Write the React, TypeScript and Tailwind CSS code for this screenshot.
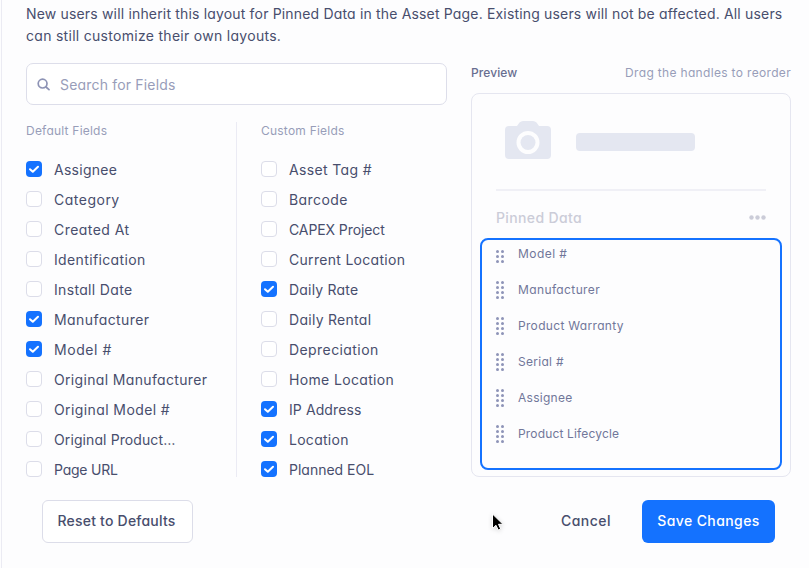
type Field = { name: string; tracking: string; checked?: boolean };

const defaultFields: Field[] = [
  { name: "Assignee", tracking: "tracking-[0.28px]", checked: true },
  { name: "Category", tracking: "tracking-[0.5px]" },
  { name: "Created At", tracking: "tracking-[0.45px]" },
  { name: "Identification", tracking: "tracking-[0.36px]" },
  { name: "Install Date", tracking: "tracking-[0.33px]" },
  { name: "Manufacturer", tracking: "tracking-[0.42px]", checked: true },
  { name: "Model #", tracking: "tracking-[0.55px]", checked: true },
  { name: "Original Manufacturer", tracking: "tracking-[0.34px]" },
  { name: "Original Model #", tracking: "tracking-[0.4px]" },
  { name: "Original Product…", tracking: "tracking-[0.1px]" },
  { name: "Page URL", tracking: "tracking-[-0.22px]" },
];

const customFields: Field[] = [
  { name: "Asset Tag #", tracking: "tracking-[0.36px]" },
  { name: "Barcode", tracking: "tracking-[0.42px]" },
  { name: "CAPEX Project", tracking: "tracking-[-0.1px]" },
  { name: "Current Location", tracking: "tracking-[0.3px]" },
  { name: "Daily Rate", tracking: "tracking-[0.2px]", checked: true },
  { name: "Daily Rental", tracking: "tracking-[0.28px]" },
  { name: "Depreciation", tracking: "tracking-[0.42px]" },
  { name: "Home Location", tracking: "tracking-[0.35px]" },
  { name: "IP Address", tracking: "tracking-[0.1px]", checked: true },
  { name: "Location", tracking: "tracking-[0.28px]", checked: true },
  { name: "Planned EOL", tracking: "tracking-[0px]", checked: true },
];

const pinned = [
  { name: "Model #", tracking: "tracking-[0.45px]" },
  { name: "Manufacturer", tracking: "tracking-[0.38px]" },
  { name: "Product Warranty", tracking: "tracking-[0.32px]" },
  { name: "Serial #", tracking: "tracking-[0.28px]" },
  { name: "Assignee", tracking: "tracking-[0.28px]" },
  { name: "Product Lifecycle", tracking: "tracking-[0.16px]" },
];

function Checkbox({ checked }: { checked?: boolean }) {
  if (!checked) return <span className="size-4 shrink-0 rounded-[4px] border border-[#dcdde9] bg-white" />;
  return (
    <span className="flex size-4 shrink-0 items-center justify-center rounded-[4px] bg-[#1472ff]">
      <svg width="16" height="16" viewBox="0 0 16 16" fill="none" stroke="#fff" strokeWidth="2" strokeLinecap="round" strokeLinejoin="round">
        <path d="M4 8.2 6.8 10.8 12 5.8" />
      </svg>
    </span>
  );
}

function FieldList({ title, fields }: { title: string; fields: Field[] }) {
  return (
    <div className="flex flex-col">
      <h3 className="h-[32px] text-[12px] leading-[18px] tracking-[0.22px] text-[#989db9]">{title}</h3>
      {fields.map((f) => (
        <label key={f.name} className="flex h-[30px] items-center gap-3 whitespace-nowrap">
          <Checkbox checked={f.checked} />
          <span className={`text-[14px] ${f.tracking}`}>{f.name}</span>
        </label>
      ))}
    </div>
  );
}

function Handle({ clipped }: { clipped: boolean }) {
  const rows = clipped ? [7.5, 12.5, 17.5] : [2.5, 7.5, 12.5, 17.5];
  return (
    <svg width="10" height="20" viewBox="0 0 10 20" fill="#8e94b8" className="shrink-0">
      {rows.map((y) => (
        <g key={y}>
          <circle cx="2.5" cy={y} r="1.5" />
          <circle cx="7.5" cy={y} r="1.5" />
        </g>
      ))}
    </svg>
  );
}

export default function App() {
  return (
    <div className="relative flex h-[568px] w-[809px] overflow-hidden bg-[#fdfdfe] font-['Inter','Open_Sans',sans-serif] text-[#484e6d] [font-feature-settings:'cv11']">
      <div className="ml-px w-px shrink-0 bg-[#ebebf3]" />
      <div className="flex flex-1 flex-col pl-6 pt-[3px]">
        <p className="whitespace-nowrap text-[14px] leading-[22px]">
          <span className="block tracking-[0.17px]">New users will inherit this layout for Pinned Data in the Asset Page. Existing users will not be affected. All users</span>
          <span className="block tracking-[0.29px]">can still customize their own layouts.</span>
        </p>

        <div className="mt-[16px] flex h-[414px] shrink-0 gap-6">
          <div className="flex w-[421px] flex-col">
            <div className="flex h-[42px] shrink-0 items-center rounded-[7px] border border-[#dddeea] bg-white pl-[10px]">
              <svg width="13" height="13" viewBox="0 0 13 13" fill="none" stroke="#8d93b5" strokeWidth="1.7" strokeLinecap="round">
                <circle cx="5.6" cy="5.6" r="4.4" />
                <path d="m9 9 3 2.7" />
              </svg>
              <span className="ml-[10px] text-[14px] tracking-[0.18px] text-[#989db9]">Search for Fields</span>
            </div>
            <div className="mt-[17px] flex">
              <div className="w-[210px]">
                <FieldList title="Default Fields" fields={defaultFields} />
              </div>
              <div className="mr-6 h-[355px] w-px bg-[#ebebf4]" />
              <FieldList title="Custom Fields" fields={customFields} />
            </div>
          </div>

          <div className="flex w-[320px] flex-col">
            <div className="flex h-[30px] items-start justify-between text-[12px] leading-[20px]">
              <span className="font-medium tracking-[0.1px] text-[#686e90]">Preview</span>
              <span className="tracking-[0.33px] text-[#989db9]">Drag the handles to reorder</span>
            </div>
            <div className="flex h-[384px] flex-col rounded-[8px] border border-[#e5e6f0] px-2">
              <div className="mx-4 flex h-[97px] items-center border-b-2 border-[#f0f0f6] pl-[9px]">
                <svg width="46" height="39" viewBox="0 0 46 39" className="mt-[-2px]">
                  <path fill="#e4e7f1" fillRule="evenodd" d="M4 5h8l2.500-3.500Q16 0 18 0h10q2 0 3.500 1.500L34 5h8q4 0 4 4v25q0 4-4 4H4q-4 0-4-4V9q0-4 4-4Zm19 5a11.500 11.500 0 1 0 0 23 11.500 11.500 0 0 0 0-23Z" />
                  <circle cx="23" cy="21.500" r="7.500" fill="#e4e7f1" />
                </svg>
                <div className="ml-[25px] h-[18px] w-[119px] rounded-[4px] bg-[#e4e7f1]" />
              </div>
              <div className="mx-4 flex h-[47px] items-center justify-between pt-[6px] text-[#cbccd8]">
                <span className="text-[14px] font-medium tracking-[0.36px]">Pinned Data</span>
                <svg width="17" height="5" viewBox="0 0 17 5" fill="currentColor">
                  <circle cx="2.500" cy="2.500" r="2.200" />
                  <circle cx="8.500" cy="2.500" r="2.200" />
                  <circle cx="14.500" cy="2.500" r="2.200" />
                </svg>
              </div>
              <div className="h-[232px] rounded-[8px] border-2 border-[#1472ff] pl-[13px]">
                {pinned.map((item, i) => (
                  <div key={item.name} className="flex h-9 items-start">
                    <div className="pt-[4px]">
                      <Handle clipped={i === 0} />
                    </div>
                    <span className={`ml-[13px] pt-[5px] text-[12px] leading-[18px] text-[#71779a] ${item.tracking}`}>{item.name}</span>
                  </div>
                ))}
              </div>
            </div>
          </div>
        </div>

        <div className="mt-[23px] flex h-[43px] items-center pl-4 text-[14px] font-medium">
          <button className="h-[43px] w-[151px] rounded-[6px] border border-[#dcdde9] bg-white pb-[2px] pr-[2px] tracking-[0.22px]">Reset to Defaults</button>
          <button className="ml-[367px] w-[52px] whitespace-nowrap pb-[2px] text-center tracking-[0.5px]">Cancel</button>
          <button className="ml-[30px] h-[43px] w-[133px] rounded-[6px] bg-[#1472ff] pb-[2px] tracking-[0.4px] text-white">Save Changes</button>
        </div>
      </div>

      <svg className="absolute left-[489px] top-[512px] drop-shadow-sm" width="16" height="22" viewBox="0 0 16 22">
        <path d="M3.500 2v14.500l3.500-3.200 2.200 4.700 2.500-1.100-2.200-4.600h4.500Z" fill="#000" stroke="#fff" strokeWidth="1" strokeLinejoin="round" />
      </svg>
    </div>
  );
}
